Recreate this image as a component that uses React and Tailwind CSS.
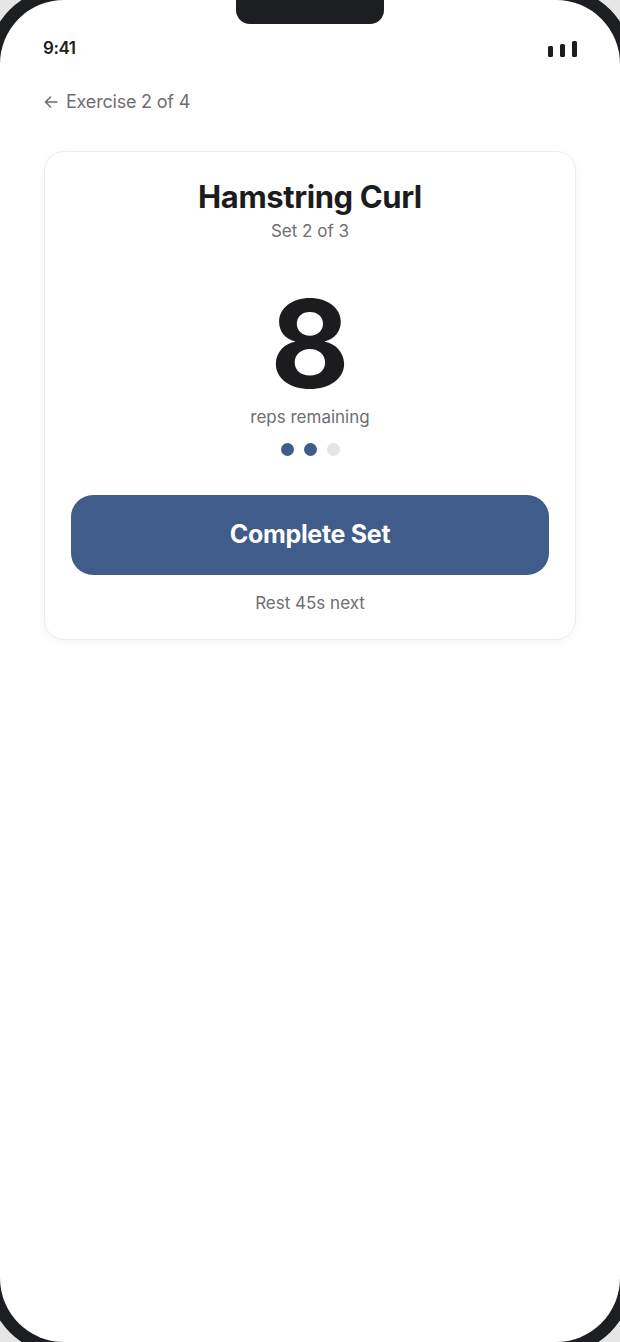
import React from 'react';

const font = { fontFamily: 'Inter, "Noto Sans", sans-serif' };

// three little bars on the right of the status bar
const SignalBars = () => (
  <div className="flex items-end gap-[7px]">
    <div className="w-[5px] h-[11px] rounded-[1.5px] bg-[#1c1c1e]"></div>
    <div className="w-[5px] h-[13px] rounded-[1.5px] bg-[#1c1c1e]"></div>
    <div className="w-[5px] h-[16px] rounded-[1.5px] bg-[#1c1c1e]"></div>
  </div>
);

const App = () => {
  const totalSets = 3;
  const doneSets = 2;

  return (
    <div className="w-[620px] h-[1342px] overflow-hidden bg-[#e6e6e6]" style={font}>
      {/* phone bezel */}
      <div className="-m-3 p-3 w-[644px] h-[1366px] bg-[#1d1e21] rounded-[74px]">
        {/* screen */}
        <div className="relative h-full bg-white rounded-[64px] overflow-hidden">
          {/* notch */}
          <div className="absolute top-0 left-[236px] w-[148px] h-[24px] bg-[#1d1e21] rounded-b-[14px]"></div>

          {/* status bar */}
          <div className="flex items-center justify-between px-[43px] pt-[38px] h-[60px]">
            <span className="text-[17px] font-semibold text-[#1c1c1e] tracking-tight">9:41</span>
            <SignalBars />
          </div>

          {/* back link */}
          <div className="flex items-center gap-[7px] px-[43px] mt-[30px] text-[#6e6e73]">
            <svg className="w-[16px] h-[16px]" viewBox="0 0 16 16" fill="none" stroke="currentColor" strokeWidth="1.6" strokeLinecap="round" strokeLinejoin="round">
              <path d="M14 8H2.5M7.5 3 2.5 8l5 5" />
            </svg>
            <span className="text-[18px] leading-[24px] tracking-[-0.2px]">Exercise 2 of 4</span>
          </div>

          {/* === EXERCISE CARD === */}
          <div className="mx-[44px] mt-[37px] bg-white rounded-[20px] border border-[#ececec] shadow-[0_2px_10px_rgba(0,0,0,0.04)] px-[26px] pt-[27px] pb-[24px] flex flex-col items-center">
            <h1 className="text-[31px] leading-[36px] font-bold text-[#1c1c1e] tracking-[-0.4px]">Hamstring Curl</h1>
            <p className="mt-[4px] text-[17px] leading-[24px] text-[#6e6e73]">Set 2 of 3</p>

            <div className="mt-[46px] text-[122px] leading-[110px] font-bold text-[#1c1c1e]">8</div>
            <p className="mt-[6px] text-[17px] leading-[24px] text-[#6e6e73]">reps remaining</p>

            <div className="mt-[14px] flex gap-[10px]">
              {Array.from({ length: totalSets }).map((_, i) => (
                <div
                  key={i}
                  className={i < doneSets ? 'w-[13px] h-[13px] rounded-full bg-[#3f5d8b]' : 'w-[13px] h-[13px] rounded-full bg-[#e5e5e5]'}
                ></div>
              ))}
            </div>

            <button className="mt-[39px] w-full h-[80px] rounded-[22px] bg-[#3f5c8a] text-white text-[25px] font-bold tracking-[-0.3px]">
              Complete Set
            </button>

            <p className="mt-[16px] text-[17px] leading-[24px] text-[#6e6e73]">Rest 45s next</p>
          </div>
        </div>
      </div>
    </div>
  );
};

export default App;
